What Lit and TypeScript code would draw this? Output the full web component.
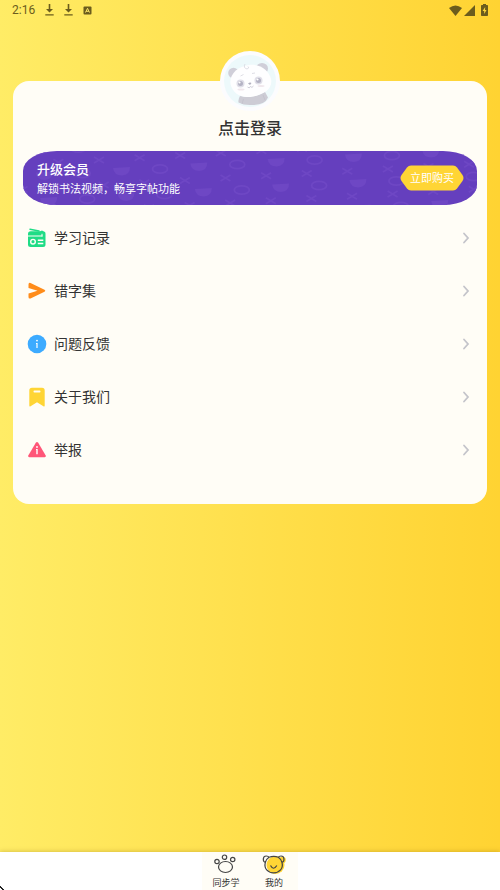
import { LitElement, html, css, svg } from "lit";
import { customElement, property } from "lit/decorators.js";

const radio = svg`<svg width="20" height="20" viewBox="0 0 20 20" fill="none">
  <path d="M3 1.200 12 3" stroke="#1fdc86" stroke-width="1.500" stroke-linecap="round"/>
  <path d="M1 6Q1 3.300 3.700 3.300H13L15 2.500 18 4Q18.500 4.500 18.500 6V16.500Q18.500 19 16 19H3.500Q1 19 1 16.500Z" fill="#1fdc86"/>
  <path d="M1 8H15.500M15 5.800V8.500" stroke="#fffdf6" stroke-width="1"/>
  <circle cx="6" cy="13.700" r="2.300" stroke="#fffdf6" stroke-width="1.400"/>
  <path d="M10.800 12.200h5.500M10.800 15.500h5.500" stroke="#fffdf6" stroke-width="1.400"/></svg>`;
const send = svg`<svg width="20" height="20" viewBox="0 0 20 20">
  <path d="M1.500 3.400Q1.500 1.300 3.500 2L17.500 8.700Q19.200 9.800 17.500 10.800L3.500 17.400Q1.500 18 1.500 16V12.500L10.500 9.800 1.500 7Z" fill="#ff8c1a"/></svg>`;
const info = svg`<svg width="20" height="20" viewBox="0 0 20 20">
  <circle cx="10" cy="10" r="9.300" fill="#3dabff"/>
  <circle cx="10" cy="6.600" r=".9" fill="#fff"/><path d="M9 9h1.600v5H9.400V10H9Z" fill="#fff"/></svg>`;
const bookmark = svg`<svg width="20" height="20" viewBox="0 0 20 20">
  <path d="M2.300 3.500Q2.300.8 5 .8H15Q17.700.8 17.700 3.500V18.600Q17.700 20 16.400 19.200L10 15.300 3.600 19.200Q2.300 20 2.300 18.600Z" fill="#ffd535"/>
  <rect x="6.500" y="3.600" width="7" height="1.800" rx=".9" fill="#fffdf6"/></svg>`;
const warn = svg`<svg width="20" height="20" viewBox="0 0 20 20">
  <path d="M8.800 2.800Q10 1.200 11.200 2.800L18.700 15.600Q19.300 17.200 17.700 17.200H2.300Q.7 17.200 1.300 15.600Z" fill="#ff5678"/>
  <circle cx="10" cy="7" r=".9" fill="#fff"/><path d="M9 9h1.700v5.200H9.300V10H9Z" fill="#fff"/></svg>`;

const rows = [
  { label: "学习记录", icon: radio },
  { label: "错字集", icon: send },
  { label: "问题反馈", icon: info },
  { label: "关于我们", icon: bookmark },
  { label: "举报", icon: warn },
];

@customElement("status-bar")
class StatusBar extends LitElement {
  static styles = css`
    :host { display: flex; align-items: center; height: 20px; padding: 0 12px; color: #6b5c1d;
      font: 12px/20px Roboto, sans-serif; }
    .left { display: flex; align-items: center; gap: 10px; flex: 1; }
    .right { display: flex; align-items: center; gap: 2px; }
    .battery { margin-left: 4px; }
    svg { display: block; }
  `;
  render() {
    const download = html`<svg width="9" height="12" viewBox="0 0 9 12" fill="currentColor"><path d="M3.700 0h1.600v5H8L4.500 8.600 1 5h2.700zM.3 10.200h8.400v1.300H.3z"/></svg>`;
    return html`
      <div class="left"><span>2:16</span>${download}${download}
        <svg width="9" height="9" viewBox="0 0 9 9"><rect x=".5" y=".5" width="8" height="8" rx="1" fill="currentColor"/><path d="M2.500 6.500 4.500 2.300 6.500 6.500M3.200 5.300H5.800" fill="none" stroke="#ffe868"/></svg>
      </div>
      <div class="right">
        <svg width="13" height="11" viewBox="0 0 13 11"><path d="M0 3Q6.500-2 13 3L6.500 11Z" fill="currentColor"/></svg>
        <svg width="11" height="11" viewBox="0 0 11 11"><path d="M11 0V11H0Z" fill="currentColor"/></svg>
        <svg class="battery" width="7" height="12" viewBox="0 0 7 12"><path d="M2 0h3v1h1.200q.8 0 .8.8v9.400q0 .8-.8.8H.8q-.8 0-.8-.8V1.800Q0 1 .8 1H2z" fill="currentColor"/><path d="M4.200 3 1.600 7H3.200V10L5.500 6H4Z" fill="#ffd83c"/></svg>
      </div>`;
  }
}

@customElement("panda-avatar")
class PandaAvatar extends LitElement {
  static styles = css`:host, svg { display: block; }`;
  render() {
    return html`<svg width="60" height="60" viewBox="0 0 60 60">
      <circle cx="30" cy="30" r="30" fill="#fcfcfe"/>
      <circle cx="30" cy="30" r="26" fill="#edf9fb"/>
      <path d="M20 45Q33 48 45 41L48 46.500Q45 54 32 54 24 54.500 18.500 51.500 18 48 20 45Z" fill="#cdccd5"/>
      <path d="M23.500 48 22 53M43 44l2 5" stroke="#bdbcc8" stroke-width=".6"/>
      <circle cx="13.500" cy="22" r="5.300" fill="#d0cfd9"/>
      <ellipse cx="42" cy="17.500" rx="6" ry="5.500" fill="#d0cfd9"/>
      <path d="M10.500 33C9 23 18 15.500 29 14 41 12.500 49 20 51 28 53 37 45 43 33 45.500 21 48 12.500 42 10.500 33Z" fill="#fefeff"/>
      <path d="M27 18Q23 17 25 13M27 18Q30 17 28 15.500M20.500 25l3-1.500M32 22.500l3-.5" fill="none" stroke="#d6d5de" stroke-width=".8"/>
      <ellipse cx="20.500" cy="32.500" rx="4" ry="4" fill="#e0dfe8"/>
      <ellipse cx="38.500" cy="29.500" rx="4" ry="4" fill="#e0dfe8"/>
      <circle cx="20.500" cy="32.500" r="2.500" fill="#b4b3c4"/><circle cx="38.500" cy="29.500" r="2.500" fill="#b4b3c4"/>
      <circle cx="19.500" cy="31.500" r="1.100" fill="#fff"/><circle cx="37.500" cy="28.500" r="1.100" fill="#fff"/>
      <path d="M28 32.500Q30 31 31.500 32L30 34Z" fill="#b2b1bf"/>
      <path d="M27.500 36Q29.500 38 30.300 35.500 32 37.500 33.500 35" fill="none" stroke="#c4c3cf" stroke-width=".8"/>
      <ellipse cx="21" cy="38.500" rx="3.500" ry="1" fill="#f1e8ed"/><ellipse cx="41" cy="35" rx="3.500" ry="1" fill="#f1e8ed"/>
    </svg>`;
  }
}

@customElement("vip-banner")
class VipBanner extends LitElement {
  static styles = css`
    :host { display: flex; align-items: center; position: relative; height: 54px; box-sizing: border-box;
      padding: 0 13px 0 14px; border-radius: 34px / 20px; overflow: hidden; background: #653fbe; color: #fff; }
    .pattern { position: absolute; inset: 0; width: 100%; height: 100%; }
    .copy { position: relative; flex: 1; padding-top: 4px; }
    h2 { margin: 0; font-size: 13px; line-height: 20px; font-weight: 500; }
    p { margin: 0; font-size: 11px; line-height: 20px; }
    .buy { position: relative; width: 64px; height: 26px; padding: 0; border: 0; background: none; color: #fff;
      font: inherit; font-size: 11px; line-height: 28px; cursor: pointer; }
    .shape { position: absolute; inset: 0; }
    .label { position: relative; }
  `;
  render() {
    const marks = [];
    for (let r = -1; r < 3; r++) {
      for (let k = -3; k < 13; k++) {
        const x = 76 + k * 40.6 + r * 4.7;
        const y = 9 - k * 2.3 + r * 25;
        marks.push(svg`<path d="M${x - 5} ${y - 3}l10 6m0-6l-10 6" stroke-width="1.800"/>`);
      }
      for (let k = -2; k < 7; k++) {
        const x = 98 + k * 77.3 + r * 4.5;
        const y = 20 - k * 4.5 + r * 25.5;
        marks.push(svg`<path d="M${x - 8} ${y - 3}l17-1q0 8-8 8.500-8 0-9-7.500Z" fill="#6e47c4" stroke="none"/>
          <ellipse cx=${x + 39} cy=${y - 2} rx="7.500" ry="4.200" stroke-width="1.800"/>`);
      }
    }
    // The right-hand marks continue the lattice on lower rows as it climbs.
    for (let k = 6; k < 13; k++) {
      const x = 90 + k * 40.6;
      marks.push(svg`<path d="M${x - 5} ${81 - k * 2.3}l10 6m0-6l-10 6" stroke-width="1.800"/>`);
    }
    return html`
      <svg class="pattern" viewBox="0 0 454 54" preserveAspectRatio="xMidYMid slice" fill="none" stroke="#6e47c4">${marks}</svg>
      <div class="copy"><h2>升级会员</h2><p>解锁书法视频，畅享字帖功能</p></div>
      <button class="buy">
        <svg class="shape" width="64" height="26" viewBox="0 0 64 26"><path d="M11 .5H53Q55.500.5 57 2.500L62.500 10Q64.500 13 62.500 16L57 23.500Q55.500 25.500 53 25.500H11Q8.500 25.500 7 23.500L1.500 16Q-.5 13 1.500 10L7 2.500Q8.500.5 11 .5Z" fill="#ffd535"/></svg>
        <span class="label">立即购买</span>
      </button>`;
  }
}

@customElement("menu-row")
class MenuRow extends LitElement {
  @property() label = "";
  @property({ attribute: false }) icon: unknown;
  static styles = css`
    :host { display: block; }
    .row { display: flex; align-items: center; gap: 7px; width: 100%; height: 53px; padding: 0 7px 0 4px; border: 0;
      background: none; color: #333; font: inherit; font-size: 14px; line-height: 20px; text-align: left; cursor: pointer; }
    .label { flex: 1; }
    svg { display: block; }
  `;
  render() {
    return html`<button class="row">${this.icon}<span class="label">${this.label}</span>
      <svg width="8" height="12" viewBox="0 0 8 12"><path d="M2 1.500 6 6 2 10.500" fill="none" stroke="#c4c4ca" stroke-width="1.800" stroke-linecap="round"/></svg>
    </button>`;
  }
}

@customElement("tab-bar")
class TabBar extends LitElement {
  static styles = css`
    :host { display: flex; justify-content: center; height: 38px; position: relative; background: #fff;
      box-shadow: 0 -1px 4px rgba(120, 90, 0, 0.25); }
    .tab { display: flex; flex-direction: column; align-items: center; width: 48px; background: #fffdf6; color: #333;
      font-size: 9px; line-height: 14px; text-decoration: none; padding-top: 2px; box-sizing: border-box; }
    .corner { position: absolute; left: 0; bottom: 0; }
    svg { display: block; }
  `;
  render() {
    return html`
      <a class="tab" href="#study">
        <svg width="24" height="22" viewBox="0 0 24 22" fill="none" stroke="#444" stroke-width="1.200">
          <ellipse cx="11.500" cy="13" rx="7" ry="5.500"/><circle cx="10.500" cy="3.200" r="2.200"/><circle cx="3" cy="7.500" r="2.200"/><circle cx="18.700" cy="5.500" r="2.200"/></svg>
        <span>同步学</span></a>
      <a class="tab" href="#me" aria-current="page">
        <svg width="24" height="22" viewBox="0 0 24 22">
          <circle cx="13.500" cy="11" r="9" fill="#ffd535"/><circle cx="20.500" cy="6" r="3.300" fill="#ffd535"/>
          <path d="M3.300 8.500C.5 7.500.5 2 4.300 2 6.300 2 7 3.300 7 3.300 9.500 2.300 14 2.300 16.300 3.300 16.300 3.300 17 2 19 2 22.800 2 22.800 7.500 20 8.500 21.500 14.500 17.500 18.800 11.600 18.800S1.800 14.500 3.300 8.500ZM3.300 8.500Q4.300 5 7 3.300M20 8.500Q19 5 16.300 3.300" fill="none" stroke="#444" stroke-width="1.200"/>
          <path d="M8.500 11.500Q11.500 17 14.800 11.500" fill="none" stroke="#444" stroke-width="1.200"/></svg>
        <span>我的</span></a>
      <svg class="corner" width="4" height="4" viewBox="0 0 4 4"><path d="M0 0h1v1h1v1h1v1h1v1H2V3H1V2H0Z" fill="#222"/></svg>`;
  }
}

@customElement("app-root")
class AppRoot extends LitElement {
  static styles = css`
    :host { display: flex; flex-direction: column; min-height: 100vh;
      background: linear-gradient(to right, #ffec66, #ffd332);
      font-family: Roboto, "Noto Sans CJK SC", sans-serif; }
    main { flex: 1; padding: 61px 13px 24px; }
    .card { padding: 0 10px 28px; border-radius: 16px; background: #fffdf6; }
    .login { display: flex; flex-direction: column; align-items: center; gap: 6px; margin: 0 auto; padding: 0; border: 0;
      background: none; color: #333; font: inherit; font-size: 16px; line-height: 24px; font-weight: 500; cursor: pointer; }
    .avatar { margin-top: -30px; }
    vip-banner { margin: 10px 0 6px; }
  `;
  render() {
    return html`
      <status-bar></status-bar>
      <main>
        <section class="card">
          <button class="login"><panda-avatar class="avatar"></panda-avatar><span>点击登录</span></button>
          <vip-banner></vip-banner>
          <nav>${rows.map((r) => html`<menu-row .label=${r.label} .icon=${r.icon}></menu-row>`)}</nav>
        </section>
      </main>
      <tab-bar></tab-bar>`;
  }
}
